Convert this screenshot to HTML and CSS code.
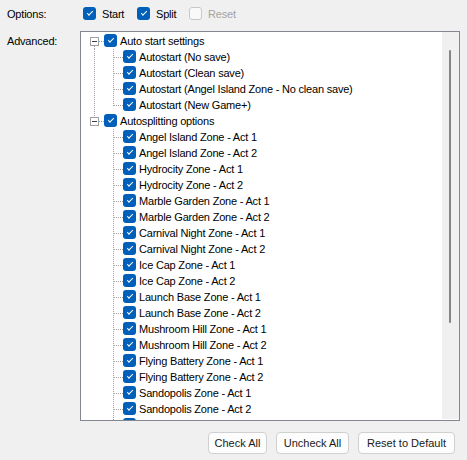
FILE: index.html
```html
<!DOCTYPE html>
<html>
<head>
<meta charset="utf-8">
<link rel="stylesheet" href="styles.css">
</head>
<body>
<div class="page">
  <div class="options-row">
    <span class="label">Options:</span>
    <label class="opt opt-start"><span class="cb"></span><span>Start</span></label>
    <label class="opt opt-split"><span class="cb"></span><span>Split</span></label>
    <label class="opt disabled"><span class="cb off"></span><span>Reset</span></label>
  </div>
  <div class="advanced-row">
    <span class="label adv-label">Advanced:</span>
    <div class="tree-box">
      <div class="tree">
        <div class="row"><span class="col root-first"><span class="exp"></span></span><span class="cb"></span><span class="txt">Auto start settings</span></div>
        <div class="row"><span class="col pipe"></span><span class="col tee"></span><span class="cb"></span><span class="txt">Autostart (No save)</span></div>
        <div class="row"><span class="col pipe"></span><span class="col tee"></span><span class="cb"></span><span class="txt">Autostart (Clean save)</span></div>
        <div class="row"><span class="col pipe"></span><span class="col tee"></span><span class="cb"></span><span class="txt">Autostart (Angel Island Zone - No clean save)</span></div>
        <div class="row"><span class="col pipe"></span><span class="col ell"></span><span class="cb"></span><span class="txt">Autostart (New Game+)</span></div>
        <div class="row"><span class="col root-last"><span class="exp"></span></span><span class="cb"></span><span class="txt">Autosplitting options</span></div>
        <div class="row"><span class="col"></span><span class="col tee"></span><span class="cb"></span><span class="txt">Angel Island Zone - Act 1</span></div>
        <div class="row"><span class="col"></span><span class="col tee"></span><span class="cb"></span><span class="txt">Angel Island Zone - Act 2</span></div>
        <div class="row"><span class="col"></span><span class="col tee"></span><span class="cb"></span><span class="txt">Hydrocity Zone - Act 1</span></div>
        <div class="row"><span class="col"></span><span class="col tee"></span><span class="cb"></span><span class="txt">Hydrocity Zone - Act 2</span></div>
        <div class="row"><span class="col"></span><span class="col tee"></span><span class="cb"></span><span class="txt">Marble Garden Zone - Act 1</span></div>
        <div class="row"><span class="col"></span><span class="col tee"></span><span class="cb"></span><span class="txt">Marble Garden Zone - Act 2</span></div>
        <div class="row"><span class="col"></span><span class="col tee"></span><span class="cb"></span><span class="txt">Carnival Night Zone - Act 1</span></div>
        <div class="row"><span class="col"></span><span class="col tee"></span><span class="cb"></span><span class="txt">Carnival Night Zone - Act 2</span></div>
        <div class="row"><span class="col"></span><span class="col tee"></span><span class="cb"></span><span class="txt">Ice Cap Zone - Act 1</span></div>
        <div class="row"><span class="col"></span><span class="col tee"></span><span class="cb"></span><span class="txt">Ice Cap Zone - Act 2</span></div>
        <div class="row"><span class="col"></span><span class="col tee"></span><span class="cb"></span><span class="txt">Launch Base Zone - Act 1</span></div>
        <div class="row"><span class="col"></span><span class="col tee"></span><span class="cb"></span><span class="txt">Launch Base Zone - Act 2</span></div>
        <div class="row"><span class="col"></span><span class="col tee"></span><span class="cb"></span><span class="txt">Mushroom Hill Zone - Act 1</span></div>
        <div class="row"><span class="col"></span><span class="col tee"></span><span class="cb"></span><span class="txt">Mushroom Hill Zone - Act 2</span></div>
        <div class="row"><span class="col"></span><span class="col tee"></span><span class="cb"></span><span class="txt">Flying Battery Zone - Act 1</span></div>
        <div class="row"><span class="col"></span><span class="col tee"></span><span class="cb"></span><span class="txt">Flying Battery Zone - Act 2</span></div>
        <div class="row"><span class="col"></span><span class="col tee"></span><span class="cb"></span><span class="txt">Sandopolis Zone - Act 1</span></div>
        <div class="row"><span class="col"></span><span class="col tee"></span><span class="cb"></span><span class="txt">Sandopolis Zone - Act 2</span></div>
        <div class="row"><span class="col"></span><span class="col tee"></span><span class="cb"></span><span class="txt">Lava Reef Zone - Act 1</span></div>
      </div>
      <div class="scrollbar"><div class="thumb"></div></div>
    </div>
  </div>
  <div class="buttons">
    <button class="btn btn-check">Check All</button>
    <button class="btn btn-uncheck">Uncheck All</button>
    <button class="btn btn-reset">Reset to Default</button>
  </div>
</div>
</body>
</html>
```
FILE: styles.css
```css
:root {
  --dotv: repeating-linear-gradient(to bottom, #a0a0a0 0 1px, transparent 1px 2px);
  --doth: repeating-linear-gradient(to right, #a0a0a0 0 1px, transparent 1px 2px);
}
html, body {
  margin: 0;
  background: #f0f0f0;
}
body {
  font-family: "Liberation Sans", Arial, sans-serif;
  font-size: 11px;
  letter-spacing: -0.2px;
  color: #000;
}
.page {
  width: 467px;
  height: 460px;
}
.options-row {
  display: flex;
  align-items: center;
  height: 27px;
  padding-left: 7px;
}
.label {
  width: 76px;
  flex: none;
  line-height: 16px;
}
.opt {
  display: flex;
  align-items: center;
  gap: 6px;
  flex: none;
}
.opt-start { width: 54px; }
.opt-split { width: 52px; }
.opt.disabled { color: #a3a3a3; }

.cb {
  width: 13px;
  height: 13px;
  box-sizing: border-box;
  border-radius: 3px;
  background: #005fb8;
  flex: none;
  display: flex;
  align-items: center;
  justify-content: center;
}
.cb::after {
  content: "";
  width: 5px;
  height: 2px;
  border-left: 1px solid #fff;
  border-bottom: 1px solid #fff;
  transform: translate(0, -1px) rotate(-45deg);
}
.cb.off {
  background: #f9f9f9;
  border: 1px solid #c8c8c8;
}
.cb.off::after { display: none; }

.advanced-row {
  display: flex;
  margin-top: 4px;
  padding-left: 7px;
}
.adv-label {
  width: 73px;
  padding-top: 2px;
}
.tree-box {
  width: 380px;
  height: 390px;
  box-sizing: border-box;
  border: 1px solid #828790;
  background: #fff;
  display: flex;
  overflow: hidden;
}
.tree {
  flex: 1;
  overflow: hidden;
  padding: 1px 0 0 4px;
}
.row {
  display: flex;
  align-items: flex-start;
  height: 16px;
  white-space: nowrap;
}
.row .cb { margin-top: 1px; }
.txt {
  line-height: 16px;
  margin-left: 3px;
}
.col {
  width: 19px;
  height: 16px;
  flex: none;
  background-repeat: no-repeat;
}
.pipe {
  background-image: var(--dotv);
  background-size: 1px 16px;
  background-position: 9px 0;
}
.tee {
  background-image: var(--dotv), var(--doth);
  background-size: 1px 16px, 9px 1px;
  background-position: 9px 0, 10px 8px;
}
.ell {
  background-image: var(--dotv), var(--doth);
  background-size: 1px 9px, 9px 1px;
  background-position: 9px 0, 10px 8px;
}
.root-first {
  background-image: var(--dotv), var(--doth);
  background-size: 1px 3px, 5px 1px;
  background-position: 9px 13px, 14px 8px;
}
.root-last {
  background-image: var(--dotv), var(--doth);
  background-size: 1px 4px, 5px 1px;
  background-position: 9px 0, 14px 8px;
}
.exp {
  display: flex;
  align-items: center;
  justify-content: center;
  width: 9px;
  height: 9px;
  box-sizing: border-box;
  margin: 4px 0 0 5px;
  border: 1px solid #a0a0a0;
  background: #fff;
}
.exp::before {
  content: "";
  width: 5px;
  height: 1px;
  background: #404040;
}
.scrollbar {
  width: 17px;
  flex: none;
  background: #f0f0f0;
  padding-top: 18px;
  margin-bottom: 1px;
}
.thumb {
  width: 2px;
  height: 273px;
  margin-left: 7px;
  background: #858585;
  border-radius: 1px;
}
.buttons {
  display: flex;
  justify-content: flex-end;
  gap: 9px;
  margin-top: 11px;
  padding-right: 12px;
}
.btn {
  height: 22px;
  box-sizing: border-box;
  border: 1px solid #d0d0d0;
  border-radius: 4px;
  background: #fdfdfd;
  font: inherit;
  color: #1a1a1a;
  padding: 0;
}
.btn-check { width: 59px; }
.btn-uncheck { width: 73px; }
.btn-reset { width: 97px; }
```
